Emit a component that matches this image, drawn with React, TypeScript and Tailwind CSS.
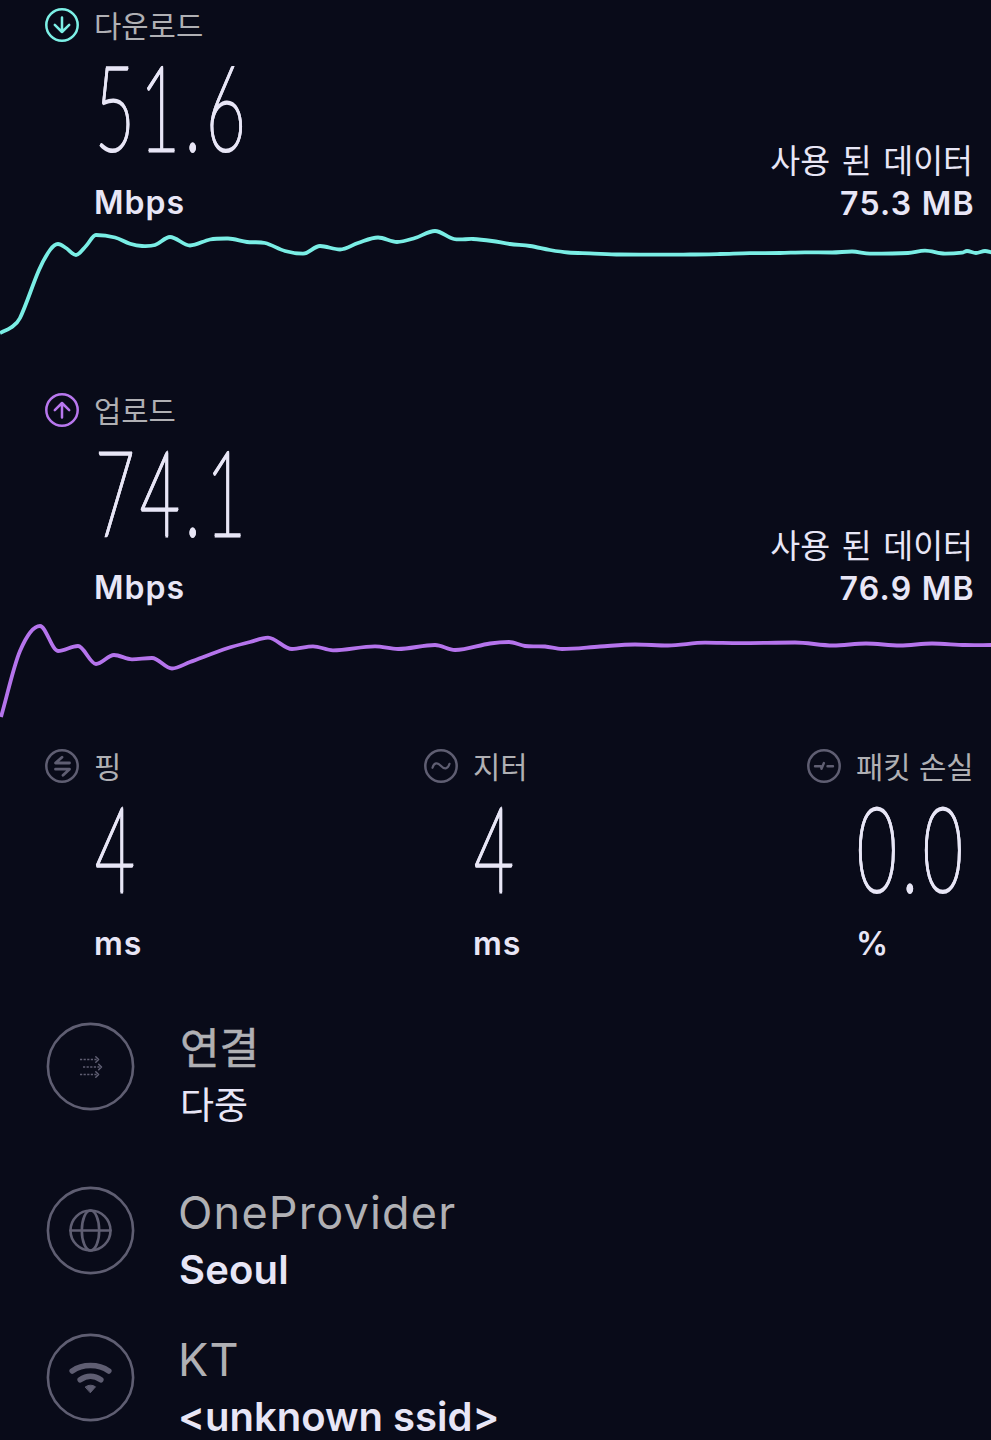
import type { ReactNode } from "react";

type Point = [number, number];

const downloadPoints: Point[] = [
  [0, 333], [11, 327.5], [20, 318], [39, 270], [50, 250], [58, 244], [66, 248], [76, 255], [86, 246],
  [96, 235], [115, 237.5], [130, 243.8], [142, 246], [155, 245], [170, 237], [190, 245.5],
  [210, 239.5], [228, 238.5], [247, 242], [265, 243], [285, 251], [303, 253.7], [320, 246],
  [340, 249.5], [358, 243], [378, 237.5], [397, 242], [415, 238], [435, 231], [454, 239],
  [473, 239], [492, 241], [510, 244], [530, 246], [550, 250], [568, 252.5], [590, 253.3],
  [620, 254.5], [690, 254.5], [720, 254], [750, 253.2], [780, 253], [805, 252.3],
  [832, 252.5], [852, 251.5], [870, 253.7], [908, 253], [925, 250.7], [945, 253.7],
  [962, 252.7], [967, 251], [976, 253], [985, 251], [992, 252.5],
];

const uploadPoints: Point[] = [
  [1, 717], [20, 651], [40, 626], [58, 651], [78, 646], [96, 664], [114, 655],
  [132, 659.3], [152, 658], [172, 668.5], [190, 662], [228, 648], [250, 642],
  [268, 637.7], [292, 649], [313, 646.3], [333, 650.3], [375, 646.3], [398, 649],
  [435, 645], [455, 650], [490, 643.5], [509, 642], [525, 646], [545, 646.5],
  [562, 649], [600, 646.5], [635, 644.5], [668, 645.5], [705, 642.7], [740, 643.2],
  [795, 642.5], [833, 645.5], [866, 643.5], [900, 645.5], [932, 643.5], [965, 645],
  [992, 645],
];

// smooth line through all points, tangents are flat on peaks
function toPath(points: Point[]) {
  const slope = points.map((p, i) => {
    const prev = points[i - 1] ?? p;
    const next = points[i + 1] ?? p;
    if ((p[1] - prev[1]) * (next[1] - p[1]) < 0) return 0;
    return (next[1] - prev[1]) / (next[0] - prev[0]);
  });
  let d = `M${points[0][0]} ${points[0][1]}`;
  for (let i = 1; i < points.length; i++) {
    const [x0, y0] = points[i - 1];
    const [x1, y1] = points[i];
    const dx = (x1 - x0) / 3;
    d += ` C${x0 + dx} ${y0 + slope[i - 1] * dx} ${x1 - dx} ${y1 - slope[i] * dx} ${x1} ${y1}`;
  }
  return d;
}

function SmallIcon({ className, children }: { className: string; children: ReactNode }) {
  return (
    <svg
      className={`h-[34px] w-[34px] shrink-0 ${className}`}
      viewBox="0 0 34 34"
      fill="none"
      stroke="currentColor"
      strokeWidth="2.5"
      strokeLinecap="round"
      strokeLinejoin="round"
    >
      <circle cx="17" cy="17" r="15.7" />
      {children}
    </svg>
  );
}

function Metric({ icon, label, value, unit }: { icon: ReactNode; label: string; value: string; unit: string }) {
  return (
    <div>
      <div className="flex h-[50px] items-center gap-[15px]">
        {icon}
        <p className="whitespace-nowrap pt-[4px] text-[29.7px] leading-none text-[#b0b0b4]">{label}</p>
      </div>
      <p className="-mt-1 ml-[50px] h-[120px] w-[150px] origin-left scale-x-[0.58] whitespace-nowrap font-[Lato] text-[118px] font-extralight leading-[120px] tracking-[9px] text-[#e8e6f6] [-webkit-text-stroke:3.2px_#e8e6f6] [text-shadow:1.8px_0_#e8e6f6,-1.8px_0_#e8e6f6]">
        {value}
      </p>
      <p className="ml-[49px] mt-4 h-[42px] text-[32px] font-semibold leading-[42px] tracking-[1px] text-[#e8e6f6]">
        {unit}
      </p>
    </div>
  );
}

function DataUsed({ amount }: { amount: string }) {
  return (
    <div className="text-right text-[#e8e6f6]">
      <p className="h-[42px] text-[32.5px] leading-[43px] [word-spacing:2.5px]">사용 된 데이터</p>
      <p className="-mr-[2px] h-[42px] text-[32px] font-semibold leading-[43px] tracking-[1.3px]">{amount}</p>
    </div>
  );
}

function InfoRow({ icon, title, detail }: { icon: ReactNode; title: ReactNode; detail: ReactNode }) {
  return (
    <div className="flex h-[114px] gap-[45px] pl-[46px]">
      <svg
        className="mt-[2px] h-[89px] w-[89px] shrink-0 text-[#5f5e72]"
        viewBox="-44.5 -44.5 89 89"
        fill="none"
        stroke="currentColor"
        strokeWidth="2.6"
        strokeLinecap="round"
        strokeLinejoin="round"
      >
        <circle r="42.6" />
        {icon}
      </svg>
      <div className="whitespace-nowrap">
        <div className="h-[57px] leading-[57px] text-[#b0b0b4]">{title}</div>
        <div className="h-[57px] leading-[57px] text-[#e8e6f6]">{detail}</div>
      </div>
    </div>
  );
}

export default function App() {
  return (
    <div className="h-[1440px] w-[991px] overflow-hidden bg-[#090b19] font-[Inter,'Noto_Sans_CJK_KR',sans-serif]">
      {/* Download */}
      <div className="flex items-end justify-between pl-[45px] pr-[18px]">
        <Metric
          icon={
            <SmallIcon className="text-[#7df0e6]">
              <path d="M17 9.5V24M9.8 16.8 17 24l7.2-7.2" />
            </SmallIcon>
          }
          label="다운로드"
          value="51.6"
          unit="Mbps"
        />
        <DataUsed amount="75.3 MB" />
      </div>
      <svg className="block h-[161px] w-full" viewBox="0 224 991 161" fill="none">
        <path d={toPath(downloadPoints)} stroke="#7aeee5" strokeWidth="3.8" />
      </svg>

      {/* Upload */}
      <div className="flex items-end justify-between pl-[45px] pr-[18px]">
        <Metric
          icon={
            <SmallIcon className="text-[#b877ee]">
              <path d="M17 24.5V10M9.8 17.2 17 10l7.2 7.2" />
            </SmallIcon>
          }
          label="업로드"
          value="74.1"
          unit="Mbps"
        />
        <DataUsed amount="76.9 MB" />
      </div>
      <svg className="block h-[132px] w-full" viewBox="0 609 991 132" fill="none">
        <path d={toPath(uploadPoints)} stroke="#b574ec" strokeWidth="3.8" />
      </svg>

      {/* Latency */}
      <div className="grid grid-cols-[379px_383px_1fr] pl-[45px]">
        <Metric
          icon={
            <SmallIcon className="text-[#5f5e72]">
              <path d="M24.5 14H10.5l6.5-5.8M10.5 20.2h14L18 26.2" strokeWidth="2.8" />
            </SmallIcon>
          }
          label="핑"
          value="4"
          unit="ms"
        />
        <Metric
          icon={
            <SmallIcon className="text-[#5f5e72]">
              <path d="M8.5 18.8c1.6-5.4 5-5.6 8.3-2 3.5 3.8 7 3.8 8.7-2" strokeWidth="2.2" />
            </SmallIcon>
          }
          label="지터"
          value="4"
          unit="ms"
        />
        <Metric
          icon={
            <SmallIcon className="text-[#5f5e72]">
              <path d="M8 17.2h6l.5 2.6 2.4-5.8M20.5 17.2H26" strokeWidth="2.4" />
            </SmallIcon>
          }
          label="패킷 손실"
          value="0.0"
          unit="%"
        />
      </div>

      {/* Connection info */}
      <div className="mt-[55px]">
        <InfoRow
          icon={
            <g strokeWidth="1.5">
              <path d="M-10.5-7H7M-7.5 .5h17M-10.5 8H7" strokeDasharray="2.2 1.4" strokeLinecap="butt" />
              <path d="m5.3-9.8 2.8 2.8-2.8 2.8M8.2-2.3 11 .5 8.2 3.3M5.3 5.2 8.1 8l-2.8 2.8" />
            </g>
          }
          title={<p className="text-[43px] [-webkit-text-stroke:0.5px_#b0b0b4]">연결</p>}
          detail={<p className="text-[37px]">다중</p>}
        />
        <div className="mt-[50px]">
          <InfoRow
            icon={
              <>
                <circle r="20" />
                <ellipse rx="8.7" ry="20" />
                <path d="M-20 0h40" />
              </>
            }
            title={<p className="-ml-[2px] text-[45px] font-normal tracking-[1.2px]">OneProvider</p>}
            detail={<p className="-ml-px text-[40px] font-semibold tracking-[0.2px]">Seoul</p>}
          />
        </div>
        <div className="mt-[33px]">
          <InfoRow
            icon={
              <>
                <path d="M-18.3-6.5C-8-13.8 8-13.8 18.3-6.5M-10.3 2.3C-4-2.3 4-2.3 10.3 2.3" strokeWidth="5.6" />
                <path d="M-5 9.3Q0 6 5 9.3L0 15Z" fill="currentColor" strokeWidth="1" />
              </>
            }
            title={<p className="-ml-[2px] text-[45px] font-normal tracking-[1.2px]">KT</p>}
            detail={<p className="-ml-[2px] text-[40px] font-semibold">&lt;unknown ssid&gt;</p>}
          />
        </div>
      </div>
    </div>
  );
}
